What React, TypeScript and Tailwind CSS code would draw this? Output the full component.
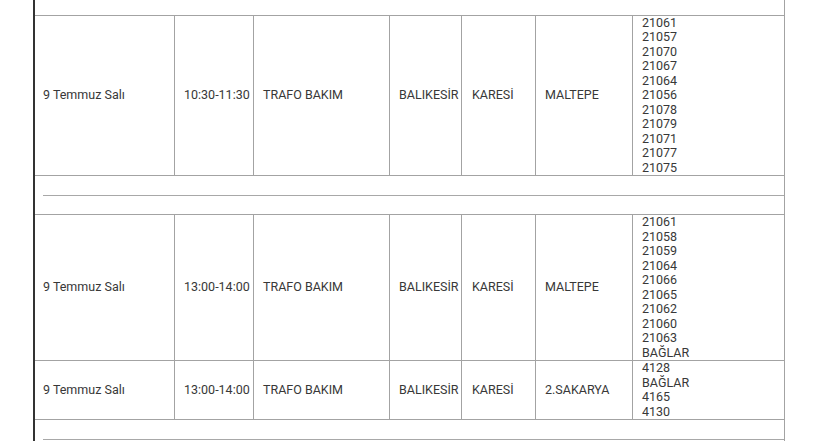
import React from "react";

type Row = {
  date: string;
  time: string;
  type: string;
  city: string;
  district: string;
  hood: string;
  codes: string[];
  h: string;
};

const rows: Row[] = [
  {
    date: "9 Temmuz Salı",
    time: "10:30-11:30",
    type: "TRAFO BAKIM",
    city: "BALIKESİR",
    district: "KARESİ",
    hood: "MALTEPE",
    codes: ["21061", "21057", "21070", "21067", "21064", "21056", "21078", "21079", "21071", "21077", "21075"],
    h: "h-[160px]",
  },
];

const rows2: Row[] = [
  {
    date: "9 Temmuz Salı",
    time: "13:00-14:00",
    type: "TRAFO BAKIM",
    city: "BALIKESİR",
    district: "KARESİ",
    hood: "MALTEPE",
    codes: ["21061", "21058", "21059", "21064", "21066", "21065", "21062", "21060", "21063", "BAĞLAR"],
    h: "h-[146px]",
  },
  {
    date: "9 Temmuz Salı",
    time: "13:00-14:00",
    type: "TRAFO BAKIM",
    city: "BALIKESİR",
    district: "KARESİ",
    hood: "2.SAKARYA",
    codes: ["4128", "BAĞLAR", "4165", "4130"],
    h: "h-[59px]",
  },
];

function DataRow({ r }: { r: Row }) {
  const cell = "flex items-center border-r border-[#a3a3a3] shrink-0";
  return (
    <div className={`flex ${r.h} border-b border-[#a3a3a3]`}>
      <div className={`${cell} w-[140px] pl-[8px]`}>{r.date}</div>
      <div className={`${cell} w-[79px] pl-[9px] whitespace-nowrap`}>{r.time}</div>
      <div className={`${cell} w-[136px] pl-[9px]`}>{r.type}</div>
      <div className={`${cell} w-[72px] pl-[9px] whitespace-nowrap`}>{r.city}</div>
      <div className={`${cell} w-[74px] pl-[10px]`}>{r.district}</div>
      <div className={`${cell} w-[97px] pl-[9px]`}>{r.hood}</div>
      <div className="flex flex-col justify-center w-[151px] pl-[9px]">
        {r.codes.map((c, i) => (
          <div key={i}>{c}</div>
        ))}
      </div>
    </div>
  );
}

function Separator({ last }: { last?: boolean }) {
  return (
    <div className={`h-[39px] pt-[19px] ${last ? "" : "border-b border-[#a3a3a3]"}`}>
      <div className="ml-[8px] h-px bg-[#a8a8a8]" />
    </div>
  );
}

export default function App() {
  return (
    <div
      className="h-[441px] w-[820px] overflow-hidden bg-white text-[12.5px] leading-[14.5px] text-[#383838]"
      style={{ fontFamily: "Roboto, 'Liberation Sans', sans-serif" }}
    >
      <div className="ml-[33px] w-[752px] border-l-2 border-r border-l-[#333333] border-r-[#a3a3a3]">
        <div className="h-[16px] border-b border-[#a3a3a3]" />
        {rows.map((r, i) => (
          <DataRow key={i} r={r} />
        ))}
        <Separator />
        {rows2.map((r, i) => (
          <DataRow key={i} r={r} />
        ))}
        <Separator last />
      </div>
    </div>
  );
}
